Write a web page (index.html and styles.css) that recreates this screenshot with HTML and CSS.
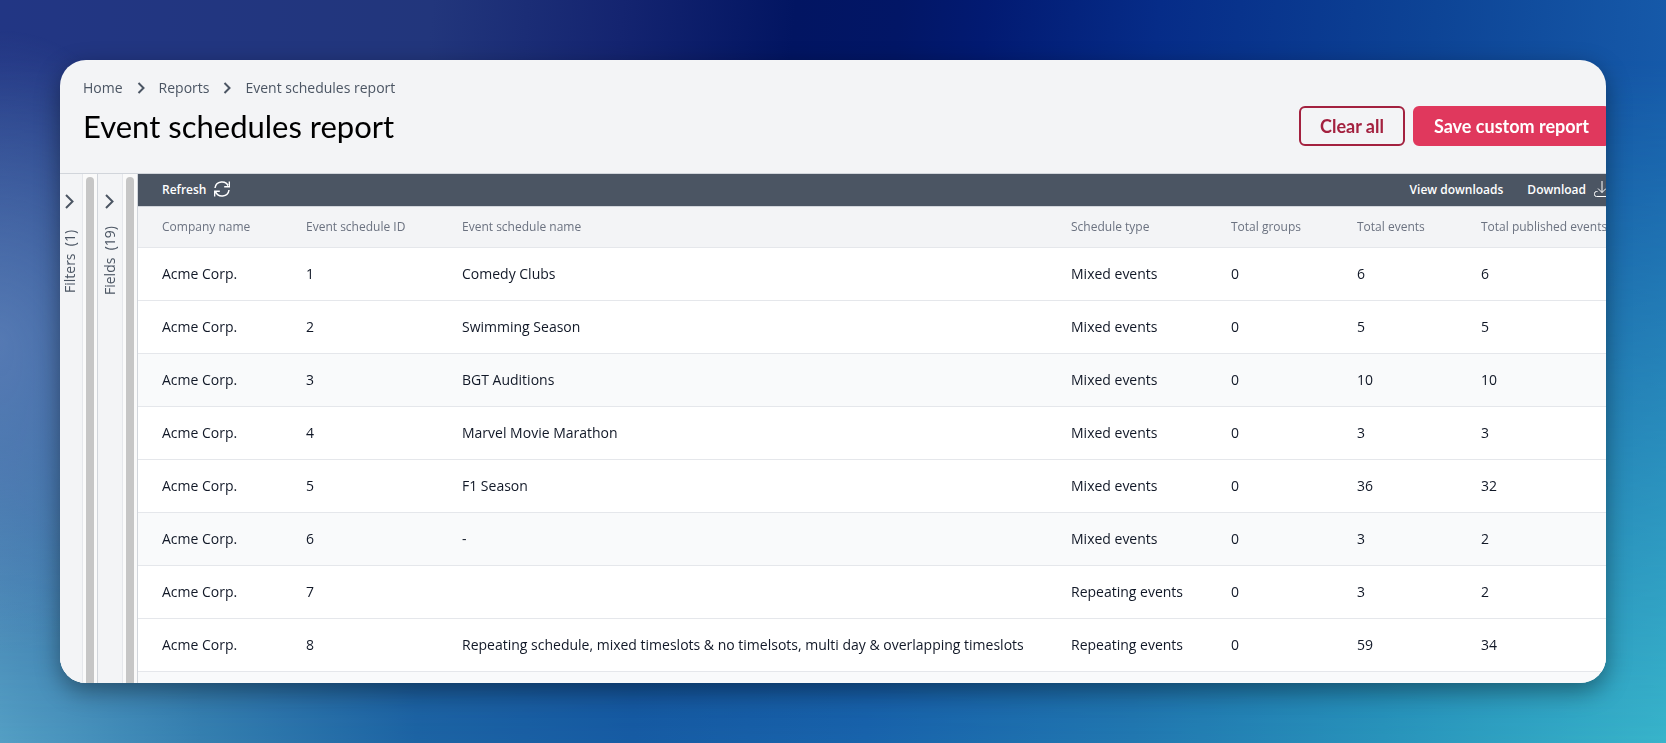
FILE: index.html
```html
<!DOCTYPE html>
<html lang="en">
<head>
    <meta charset="UTF-8">
    <title>Event schedules report</title>
    <link rel="stylesheet" href="styles.css">
</head>
<body>
    <div class="window">
        <div class="app">
            <header class="page-header">
                <nav class="breadcrumbs" aria-label="Breadcrumb">
                    <a href="#">Home</a>
                    <svg class="chevron-small" viewBox="0 0 8 12"><path d="M1.5 1 L6.5 6 L1.5 11"/></svg>
                    <a href="#">Reports</a>
                    <svg class="chevron-small" viewBox="0 0 8 12"><path d="M1.5 1 L6.5 6 L1.5 11"/></svg>
                    <a href="#">Event schedules report</a>
                </nav>
                <div class="title-row">
                    <h1>Event schedules report</h1>
                    <div class="actions">
                        <button type="button" class="btn btn-outline">Clear all</button>
                        <button type="button" class="btn btn-primary">Save custom report</button>
                    </div>
                </div>
            </header>

            <div class="content">
                <aside class="panel panel-filters">
                    <button type="button" class="panel-toggle">
                        <svg class="chevron" viewBox="0 0 9 15"><path d="M1 1 L7.5 7.5 L1 14"/></svg>
                        <span class="panel-label">Filters&nbsp; (1)</span>
                    </button>
                    <div class="scrollbar"></div>
                </aside>
                <aside class="panel">
                    <button type="button" class="panel-toggle">
                        <svg class="chevron" viewBox="0 0 9 15"><path d="M1 1 L7.5 7.5 L1 14"/></svg>
                        <span class="panel-label">Fields&nbsp; (19)</span>
                    </button>
                    <div class="scrollbar"></div>
                </aside>

                <main class="report">
                    <div class="toolbar">
                        <button type="button" class="tool">
                            Refresh
                            <svg class="icon" viewBox="0 0 16 16">
                                <path d="M1 7 A7 7 0 0 1 14.5 5.5 M15.4 0.5 V5.8 H10.2"/>
                                <path d="M15 9 A7 7 0 0 1 1.5 10.5 M0.6 15.5 V10.2 H5.8"/>
                            </svg>
                        </button>
                        <div class="tools-right">
                            <button type="button" class="tool">View downloads</button>
                            <button type="button" class="tool">
                                Download
                                <svg class="icon icon-thin" viewBox="0 0 16 16">
                                    <path d="M8 0 V11.5 M4 7.5 L8 11.5 L12 7.5"/>
                                    <path d="M3.5 10.5 H2.5 Q0.5 10.5 0.5 12.5 V13.5 Q0.5 15.5 2.5 15.5 H13.5 Q15.5 15.5 15.5 13.5 V12.5 Q15.5 10.5 13.5 10.5 H12.5"/>
                                </svg>
                            </button>
                        </div>
                    </div>
                    <table class="report-table">
                        <colgroup>
                            <col class="col-company">
                            <col class="col-id">
                            <col class="col-name">
                            <col class="col-type">
                            <col class="col-groups">
                            <col class="col-events">
                            <col>
                        </colgroup>
                        <thead>
                            <tr>
                                <th>Company name</th>
                                <th>Event schedule ID</th>
                                <th>Event schedule name</th>
                                <th>Schedule type</th>
                                <th>Total groups</th>
                                <th>Total events</th>
                                <th>Total published events</th>
                            </tr>
                        </thead>
                        <tbody>
                            <tr><td>Acme Corp.</td><td>1</td><td>Comedy Clubs</td><td>Mixed events</td><td>0</td><td>6</td><td>6</td></tr>
                            <tr><td>Acme Corp.</td><td>2</td><td>Swimming Season</td><td>Mixed events</td><td>0</td><td>5</td><td>5</td></tr>
                            <tr><td>Acme Corp.</td><td>3</td><td>BGT Auditions</td><td>Mixed events</td><td>0</td><td>10</td><td>10</td></tr>
                            <tr><td>Acme Corp.</td><td>4</td><td>Marvel Movie Marathon</td><td>Mixed events</td><td>0</td><td>3</td><td>3</td></tr>
                            <tr><td>Acme Corp.</td><td>5</td><td>F1 Season</td><td>Mixed events</td><td>0</td><td>36</td><td>32</td></tr>
                            <tr><td>Acme Corp.</td><td>6</td><td>-</td><td>Mixed events</td><td>0</td><td>3</td><td>2</td></tr>
                            <tr><td>Acme Corp.</td><td>7</td><td></td><td>Repeating events</td><td>0</td><td>3</td><td>2</td></tr>
                            <tr><td>Acme Corp.</td><td>8</td><td>Repeating schedule, mixed timeslots &amp; no timelsots, multi day &amp; overlapping timeslots</td><td>Repeating events</td><td>0</td><td>59</td><td>34</td></tr>
                        </tbody>
                    </table>
                </main>
            </div>
        </div>
    </div>
</body>
</html>
```

FILE: styles.css
```css
* {
    box-sizing: border-box;
}
body {
    margin: 0;
    height: 100vh;
    padding: 60px;
    overflow: hidden;
    font-family: "Open Sans", "Noto Sans", sans-serif;
    font-size: 14px;
    color: #111827;
    background: linear-gradient(95deg, #223684 0%, #22367c 25%, #142470 36%, #021562 46%, #021666 52%, #021a72 57%, #062c88 67%, #0d4496 83%, #185fae 100%);
}
/* lighter blues that fade in towards the bottom */
body::before,
body::after {
    content: "";
    position: fixed;
    inset: 0;
    z-index: -1;
}
body::before {
    background: linear-gradient(90deg, #549fc4 0%, #3580b0 12%, #1c64a4 25%, #165ca4 38%, #1864ac 52%, #2178b0 68%, #2894bb 83%, #38b4ca 100%);
    -webkit-mask-image: linear-gradient(#0000 8%, #000 100%);
    mask-image: linear-gradient(#0000 8%, #000 100%);
}
body::after {
    background: radial-gradient(ellipse 12% 42% at 0% 46%, rgba(98, 132, 188, 0.7) 0%, rgba(98, 132, 188, 0) 100%);
}
.window {
    height: 100%;
    overflow: hidden;
    border-radius: 26px;
    background: #f3f4f6;
    box-shadow: 0 8px 24px rgba(0, 0, 0, 0.4);
}
/* the app is a bit wider than its window and gets cut off on the right */
.app {
    width: calc(100% + 28px);
    height: 100%;
    display: flex;
    flex-direction: column;
}

/* header */
.page-header {
    padding: 18px 24px 27px 23px;
    border-bottom: 1px solid #d1d5db;
}
.breadcrumbs {
    display: flex;
    align-items: center;
    gap: 14px;
    line-height: 20px;
}
.breadcrumbs a {
    color: #4b5563;
    text-decoration: none;
}
.chevron-small,
.chevron,
.icon {
    fill: none;
    stroke: currentColor;
}
.chevron-small {
    width: 8px;
    height: 12px;
    color: #4b5563;
    stroke-width: 2;
}
.title-row {
    display: flex;
    justify-content: space-between;
    align-items: center;
    margin-top: 8px;
}
h1 {
    margin: 0;
    font-family: Lato, sans-serif;
    font-size: 31px;
    font-weight: 400;
    line-height: 40px;
    color: #000;
}
.actions {
    display: flex;
    gap: 8px;
}
.btn {
    height: 40px;
    padding: 0 19px;
    border: 2px solid #e0385d;
    border-radius: 6px;
    font-family: Lato, sans-serif;
    font-size: 18px;
    font-weight: 700;
}
.btn-outline {
    border-color: #a3213f;
    background: transparent;
    color: #a3213f;
}
.btn-primary {
    background: #e0385d;
    color: #fff;
}

/* collapsed side panels */
.content {
    flex: 1;
    display: flex;
    min-height: 0;
}
.panel {
    display: flex;
    width: 40px;
    border-right: 1px solid #d1d5db;
    background: #fafafa;
}
.panel-filters {
    width: 38px;
}
.panel-toggle {
    flex: 1;
    display: flex;
    flex-direction: column;
    align-items: center;
    gap: 17px;
    padding: 20px 1px 0 0;
    border: 0;
    border-right: 1px solid #e5e7eb;
    background: #f3f4f6;
    color: #4b5563;
    font-family: inherit;
    font-size: 14px;
}
.panel-filters .panel-toggle {
    padding-right: 3px;
}
.chevron {
    width: 9px;
    height: 15px;
    stroke-width: 2;
}
.panel-label {
    writing-mode: vertical-rl;
    transform: rotate(180deg);
    height: 70px;
    line-height: 18px;
    text-align: center;
}
.scrollbar {
    width: 8px;
    margin: 3px 3px 0;
    border-radius: 4px 4px 0 0;
    background: #c6c6c6;
}

/* report */
.report {
    flex: 1;
    min-width: 0;
    overflow: hidden;
    background: #f9fafb;
}
.toolbar {
    display: flex;
    justify-content: space-between;
    height: 33px;
    padding: 0 24px 2px;
    border-bottom: 1px solid #d1d5db;
    background: #4b5563;
}
.tools-right {
    display: flex;
    gap: 24px;
}
.tool {
    display: flex;
    align-items: center;
    gap: 8px;
    padding: 0;
    border: 0;
    background: none;
    color: #fff;
    font-family: inherit;
    font-size: 12px;
    font-weight: 600;
}
.icon {
    width: 16px;
    height: 16px;
    stroke-width: 1.5;
}
.icon-thin {
    stroke-width: 1;
}
.report-table {
    width: 100%;
    table-layout: fixed;
    border-collapse: separate;
    border-spacing: 0;
}
.col-company {
    width: 144px;
}
.col-id {
    width: 156px;
}
.col-name {
    width: 609px;
}
.col-type {
    width: 160px;
}
.col-groups {
    width: 126px;
}
.col-events {
    width: 124px;
}
.report-table th,
.report-table td {
    padding: 0 24px 2px;
    border-bottom: 1px solid #e5e7eb;
    text-align: left;
    white-space: nowrap;
}
.report-table th {
    height: 41px;
    background: #f3f4f6;
    color: #6b7280;
    font-size: 12px;
    font-weight: 400;
}
.report-table td {
    height: 53px;
    background: #fff;
}
.report-table tr:nth-child(3n) td {
    background: #f9fafb;
}
```
